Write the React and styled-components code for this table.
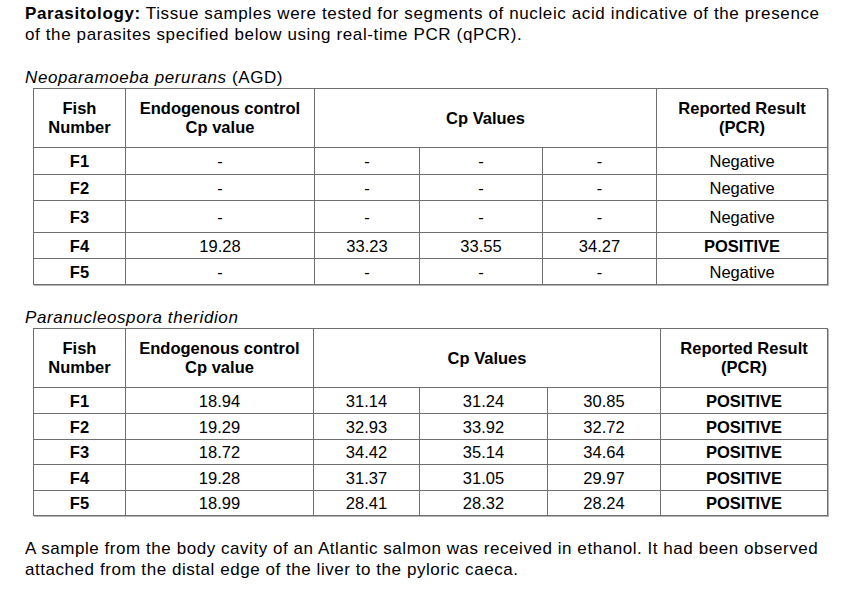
import React from 'react';
import styled, { createGlobalStyle } from 'styled-components';

const GlobalStyle = createGlobalStyle`
    body {
        margin: 0;
        background: #fff;
        color: #000;
        font-family: "Liberation Sans", Arial, sans-serif;
    }
`;

const Page = styled.div`
    padding: 3px 0 0 25px;
    width: 841px;
    box-sizing: border-box;
`;

const Para = styled.p`
    margin: 0;
    font-size: 17px;
    letter-spacing: ${props => props.spacing || 0.62}px;
    line-height: 21px;
    white-space: nowrap;
    b {
        font-weight: 700;
    }
`;

const Section = styled.section`
    margin-top: ${props => props.gap}px;
`;

const SpeciesTitle = styled.div`
    font-size: 17px;
    letter-spacing: 0.6px;
    line-height: 21px;
    i {
        font-style: italic;
    }
`;

const Table = styled.table`
    margin-left: 8px;
    border-collapse: collapse;
    table-layout: fixed;
    width: 794px;
    font-size: 16.5px;
    border: 1px solid #6e6e6e;
    box-shadow: 1px 1px 0 #b5b5b5;
`;

const HeadCell = styled.th`
    height: 58px;
    padding: 0 4px;
    font-weight: 700;
    line-height: 19px;
    text-align: center;
    vertical-align: middle;
    border: 1px solid #6e6e6e;
`;

const Row = styled.tr`
    height: ${props => props.h || 26}px;
`;

const Cell = styled.td`
    padding: 0 4px;
    text-align: center;
    vertical-align: middle;
    line-height: 18px;
    font-weight: ${props => (props.strong ? 700 : 400)};
    border: 1px solid #6e6e6e;
`;

const agd = {
    cols: [92, 189, 105, 123, 114, 171],
    rows: [
        { id: 'F1', ctrl: '-', cp: ['-', '-', '-'], result: 'Negative', h: 27 },
        { id: 'F2', ctrl: '-', cp: ['-', '-', '-'], result: 'Negative', h: 26 },
        { id: 'F3', ctrl: '-', cp: ['-', '-', '-'], result: 'Negative', h: 32 },
        { id: 'F4', ctrl: '19.28', cp: ['33.23', '33.55', '34.27'], result: 'POSITIVE', h: 26 },
        { id: 'F5', ctrl: '-', cp: ['-', '-', '-'], result: 'Negative', h: 26 },
    ],
};

const pt = {
    cols: [92, 188, 106, 128, 113, 167],
    rows: [
        { id: 'F1', ctrl: '18.94', cp: ['31.14', '31.24', '30.85'], result: 'POSITIVE', h: 26 },
        { id: 'F2', ctrl: '19.29', cp: ['32.93', '33.92', '32.72'], result: 'POSITIVE', h: 26 },
        { id: 'F3', ctrl: '18.72', cp: ['34.42', '35.14', '34.64'], result: 'POSITIVE', h: 25 },
        { id: 'F4', ctrl: '19.28', cp: ['31.37', '31.05', '29.97'], result: 'POSITIVE', h: 26 },
        { id: 'F5', ctrl: '18.99', cp: ['28.41', '28.32', '28.24'], result: 'POSITIVE', h: 25 },
    ],
};

const ResultTable = ({ data }) => (
    <Table>
        <colgroup>
            {data.cols.map((w, i) => <col key={i} style={{ width: w }} />)}
        </colgroup>
        <thead>
            <tr>
                <HeadCell>Fish<br />Number</HeadCell>
                <HeadCell>Endogenous control<br />Cp value</HeadCell>
                <HeadCell colSpan={3}>Cp Values</HeadCell>
                <HeadCell>Reported Result<br />(PCR)</HeadCell>
            </tr>
        </thead>
        <tbody>
            {data.rows.map(r => (
                <Row key={r.id} h={r.h}>
                    <Cell strong>{r.id}</Cell>
                    <Cell>{r.ctrl}</Cell>
                    {r.cp.map((v, i) => <Cell key={i}>{v}</Cell>)}
                    <Cell strong={r.result === 'POSITIVE'}>{r.result}</Cell>
                </Row>
            ))}
        </tbody>
    </Table>
);

const App = () => {
    return (
        <Page>
            <GlobalStyle />
            <Para>
                <b>Parasitology:</b> Tissue samples were tested for segments of nucleic acid indicative of the presence
                <br />
                of the parasites specified below using real-time PCR (qPCR).
            </Para>
            <Section gap={22}>
                <SpeciesTitle><i>Neoparamoeba perurans</i> (AGD)</SpeciesTitle>
                <ResultTable data={agd} />
            </Section>
            <Section gap={22}>
                <SpeciesTitle><i>Paranucleospora theridion</i></SpeciesTitle>
                <ResultTable data={pt} />
            </Section>
            <Section gap={22}>
                <Para spacing={0.55}>
                    A sample from the body cavity of an Atlantic salmon was received in ethanol. It had been observed
                    <br />
                    attached from the distal edge of the liver to the pyloric caeca.
                </Para>
            </Section>
        </Page>
    );
};

export default App;
